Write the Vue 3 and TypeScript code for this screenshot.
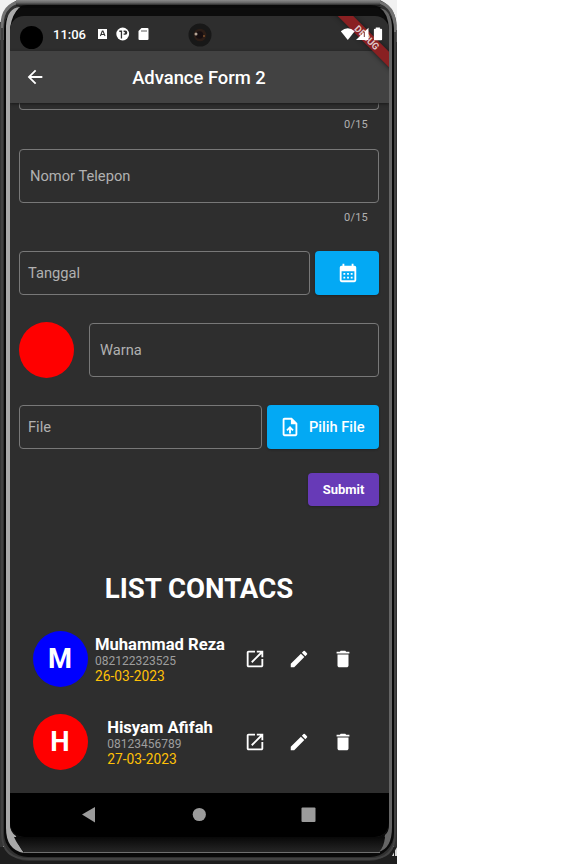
<script setup lang="ts">
interface Contact {
  initial: string
  name: string
  phone: string
  date: string
  color: string
}

const contacts: Contact[] = [
  { initial: 'M', name: 'Muhammad Reza', phone: '082122323525', date: '26-03-2023', color: '#0000ff' },
  { initial: 'H', name: 'Hisyam Afifah', phone: '08123456789', date: '27-03-2023', color: '#ff0000' },
]
</script>

<template>
  <div class="stage">
    <div class="phone">
      <svg class="shell" width="397" height="864" viewBox="0 0 397 864" aria-hidden="true">
        <defs>
          <linearGradient id="metal" x1="0" y1="0" x2="0" y2="1">
            <stop offset="0" stop-color="#8a8a8a" />
            <stop offset="0.45" stop-color="#666" />
            <stop offset="1" stop-color="#111" />
          </linearGradient>
          <linearGradient id="chin" x1="0" y1="0" x2="0" y2="1">
            <stop offset="0" stop-color="#080808" />
            <stop offset="1" stop-color="#252525" />
          </linearGradient>
        </defs>
        <rect width="397" height="60" fill="#f1f1f1" />
        <rect y="22" width="3" height="842" fill="#353535" />
        <rect x="394" y="30" width="3" height="817" fill="#303030" />
        <rect y="847" width="397" height="17" fill="#1e1e1e" />
        <path d="M397 847v9h-5z" fill="#d8d8d8" />
        <path d="M394.5 849v8" stroke="#1e1e1e" />
        <rect x="1" y="-2" width="395.5" height="863" rx="27" fill="#303030" />
        <path d="M2 40V26Q2 1 28 1H370Q395 1 395 28V42" fill="none" stroke="#727272" stroke-width="3" />
        <rect x="16" width="364" height="6" fill="url(#metal)" />
        <path d="M2 28V834Q2 859 29 859H370Q395 859 395 834V32" fill="none" stroke="#424242" stroke-width="2" />
        <rect x="4" y="5" width="390" height="852" rx="24" fill="#090909" />
        <path d="M20 7Q7 8 6 26V828Q6 850 24 853Q17 844 16 836Q10 832 10 825V28Q12 14 20 7Z" fill="#a9a9a9" />
        <path d="M380 8Q392 10 392 29V827Q392 849 378 852Q384 844 385 835Q389 832 389 825V29Q388 13 380 8Z" fill="#656565" />
        <path d="M19 8H378Q387 13 388 34H11Q12 16 19 8Z" fill="#0c0c0c" />
        <path d="M14 837H385Q384 847 379 852H24Q17 844 14 837Z" fill="url(#chin)" />
        <path d="M24 852.5H380" stroke="#707070" />
      </svg>

      <main class="screen">
        <header class="status">
          <span class="punch"></span>
          <span class="clock">11:06</span>
          <svg class="notices" width="51" height="14" viewBox="0 0 51 14">
            <rect x="1" y="2" width="9" height="10" fill="#fff" />
            <path d="M3.4 9 5.3 4h.7L8 9M4.2 7.5h3" fill="none" stroke="#333" stroke-width="1.1" />
            <circle cx="25.7" cy="7" r="6.4" fill="#fff" />
            <path d="M22.3 3.6h2.8v7.8h-1.3V4.9h-1.5zM26.6 3.6h1.6a2.1 2.1 0 0 1 0 4.2h-1.6V6.6h1.2V4.9h-1.2z" fill="#333" />
            <path d="M44.5 1h6q1 0 1 1v10q0 1-1 1h-8q-1 0-1-1V4z" fill="#fff" />
            <path d="M45 3v2M47 3v2M49 3v2" stroke="#333" stroke-width=".8" />
          </svg>
          <svg class="camera" width="24" height="24" viewBox="0 0 24 24">
            <circle cx="12" cy="12" r="11.5" fill="#181818" />
            <circle cx="12" cy="12" r="6.3" fill="#2b1d17" />
            <circle cx="11.5" cy="12" r="3.8" fill="#160e10" />
            <circle cx="8" cy="11" r="1.5" fill="#b4a597" />
            <circle cx="16" cy="13" r="1" fill="#80502b" />
          </svg>
          <svg class="signals" width="44" height="16" viewBox="0 0 44 16">
            <path d="M.8 5.3Q7.8-.8 14.7 5.3L7.8 14z" fill="#fff" />
            <path d="M28.5 1.8V14H16z" fill="#fff" />
            <path d="M24.3 6v5" stroke="#763333" />
            <path d="M35.8 2.8V1.5h4.1v1.3h1.2q1 0 1 1v9.4q0 1-1 1h-6.2q-1 0-1-1V3.8q0-1 1-1z" fill="#fff" />
          </svg>
        </header>

        <div class="appbar">
          <svg class="back" width="22" height="22" viewBox="0 0 24 24"><path d="M20 11H7.83l5.59-5.59L12 4l-8 8 8 8 1.41-1.41L7.83 13H20z" fill="#fff" /></svg>
          <h1>Advance Form 2</h1>
        </div>

        <section class="content">
          <div class="field cut"></div>
          <p class="counter first">0/15</p>
          <div class="field tall">Nomor Telepon</div>
          <p class="counter second">0/15</p>
          <div class="row date">
            <div class="field">Tanggal</div>
            <button class="blue calendar" aria-label="Tanggal">
              <svg width="22" height="22" viewBox="0 0 24 24"><path fill="#fff" fill-rule="evenodd" d="M19 4h-1V2h-2v2H8V2H6v2H5q-2 0-2 2v14q0 2 2 2h14q2 0 2-2V6q0-2-2-2zm0 16H5V10h14zM7 12h2v2H7zm4 0h2v2h-2zm4 0h2v2h-2zM7 16h2v2H7zm4 0h2v2h-2zm4 0h2v2h-2z" /></svg>
            </button>
          </div>
          <div class="row color">
            <span class="disc"></span>
            <div class="field tall">Warna</div>
          </div>
          <div class="row file">
            <div class="field">File</div>
            <button class="blue pick">
              <svg width="22" height="22" viewBox="0 0 24 24"><path fill="#fff" d="M14 2H6c-1.1 0-2 .9-2 2v16c0 1.1.89 2 1.99 2H18c1.1 0 2-.9 2-2V8zm4 18H6V4h7v5h5zM8 15.01l1.41 1.41L11 14.84V19h2v-4.16l1.59 1.59L16 15.01 12.01 11z" /></svg>
              <span>Pilih File</span>
            </button>
          </div>
          <button class="submit">Submit</button>

          <h2>LIST CONTACS</h2>
          <ul>
            <li v-for="c in contacts" :key="c.phone">
              <span class="avatar" :style="{ backgroundColor: c.color }">{{ c.initial }}</span>
              <div class="who">
                <div>
                  <strong>{{ c.name }}</strong>
                  <span class="phone-no">{{ c.phone }}</span>
                  <span class="when">{{ c.date }}</span>
                </div>
              </div>
              <div class="actions">
                <svg width="22" height="22" viewBox="0 0 24 24"><path fill="#fff" d="M19 19H5V5h7V3H5c-1.11 0-2 .9-2 2v14c0 1.1.89 2 2 2h14c1.1 0 2-.9 2-2v-7h-2zM14 3v2h3.59l-9.83 9.83 1.41 1.41L19 6.41V10h2V3z" /></svg>
                <svg width="22" height="22" viewBox="0 0 24 24"><path fill="#fff" d="M3 17.25V21h3.75L17.81 9.94l-3.75-3.75zM20.71 7.04a1 1 0 0 0 0-1.41l-2.34-2.34a1 1 0 0 0-1.41 0l-1.83 1.83 3.75 3.75z" /></svg>
                <svg width="22" height="22" viewBox="0 0 24 24"><path fill="#fff" d="M6 19c0 1.1.9 2 2 2h8c1.1 0 2-.9 2-2V7H6zM19 4h-3.5l-1-1h-5l-1 1H5v2h14z" /></svg>
              </div>
            </li>
          </ul>
        </section>

        <nav>
          <svg width="379" height="44" viewBox="0 0 379 44" fill="#9b9b9b">
            <path d="M72 21.5 85 14v15.5z" />
            <circle cx="189.3" cy="21.5" r="6.6" />
            <rect x="291.5" y="14.5" width="14" height="14.5" rx="1" />
          </svg>
        </nav>

        <div class="banner"><span>DEBUG</span></div>
      </main>
    </div>
  </div>
</template>

<style>
body {
  margin: 0;
  background: #fff;
}
</style>

<style scoped>
.stage {
  width: 585px;
  height: 864px;
  overflow: hidden;
  font-family: Roboto, "Liberation Sans", sans-serif;
}
.phone {
  position: relative;
  box-sizing: border-box;
  width: 397px;
  height: 864px;
  padding: 16px 8px 27px 10px;
}
.shell {
  position: absolute;
  inset: 0;
}
.screen {
  position: relative;
  display: flex;
  flex-direction: column;
  width: 379px;
  height: 821px;
  overflow: hidden;
  border-radius: 14px;
  background: #2e2e2e;
  color: #fff;
}
.status {
  position: relative;
  z-index: 3;
  display: flex;
  align-items: center;
  flex: 0 0 35px;
  height: 35px;
}
.punch {
  width: 23px;
  height: 23px;
  margin: 7px 0 0 10px;
  border-radius: 50%;
  background: #000;
}
.clock {
  width: 34px;
  margin: 2px 0 0 10px;
  font-size: 13px;
  font-weight: 500;
  line-height: 16px;
  white-space: nowrap;
}
.notices {
  margin: 1px 0 0 10px;
  overflow: visible;
}
.camera {
  margin: 3px 0 0 40px;
}
.signals {
  margin: 0 5px 0 auto;
}
.appbar {
  position: relative;
  display: flex;
  align-items: center;
  flex: 0 0 52px;
  background: #424242;
  box-shadow: 0 1px 3px #191919;
}
.back {
  margin-left: 14px;
}
h1 {
  flex: 1;
  margin: 2px 37px 0 0;
  font-size: 18.4px;
  font-weight: 500;
  line-height: 24px;
  text-align: center;
}
.content {
  display: flex;
  flex-direction: column;
  flex: 1;
  padding: 0 10px 0 9px;
}
.field {
  box-sizing: border-box;
  display: flex;
  align-items: center;
  height: 44px;
  padding: 0 9px 1px 8px;
  border: 1px solid #787878;
  border-radius: 4px;
  color: #b1b1b1;
  font-size: 14.7px;
}
.field.tall {
  height: 54px;
  padding: 0 9px 0 10px;
}
.field.cut {
  height: 7px;
  border-top: 0;
  border-radius: 0 0 4px 4px;
}
.counter {
  height: 14px;
  margin: 0;
  padding-right: 11px;
  color: #b1b1b1;
  font-size: 11px;
  letter-spacing: 0.2px;
  line-height: 14px;
  text-align: right;
}
.counter.first {
  margin: 8px 0 17px;
}
.counter.second {
  margin: 8px 0 26px;
}
.row {
  display: flex;
  align-items: center;
  gap: 5px;
}
.row .field {
  flex: 1;
}
.color {
  gap: 15px;
  margin: 27px 0;
}
.disc,
.avatar {
  flex: 0 0 55px;
  width: 55px;
  height: 56px;
  border-radius: 50%;
  background: #f00;
}
button {
  display: flex;
  align-items: center;
  justify-content: center;
  box-sizing: border-box;
  margin: 0;
  padding: 0;
  border: 0;
  border-radius: 4px;
  color: #fff;
  font: 500 14.6px Roboto, "Liberation Sans", sans-serif;
  box-shadow: 0 1px 2px #222;
}
.blue {
  height: 44px;
  background: #03a9f4;
}
.calendar {
  width: 64px;
  padding-left: 1px;
}
.pick {
  gap: 7.5px;
  width: 112px;
  padding-right: 2px;
}
.submit {
  align-self: flex-end;
  width: 71px;
  height: 33px;
  margin-top: 24px;
  background: #673ab7;
  font-size: 13px;
  font-weight: 700;
}
h2 {
  height: 34px;
  margin: 66px 0 0;
  font-size: 27.6px;
  font-weight: 700;
  line-height: 34px;
  text-align: center;
}
ul {
  display: flex;
  flex-direction: column;
  gap: 27px;
  margin: 25px 0 0;
  padding: 0 0 0 14px;
  list-style: none;
}
li {
  display: flex;
  align-items: center;
  height: 56px;
}
.avatar {
  display: flex;
  align-items: center;
  justify-content: center;
  box-sizing: border-box;
  padding-right: 1px;
  font-size: 27.4px;
  font-weight: 700;
}
.who {
  display: flex;
  justify-content: center;
  width: 144px;
}
.who div {
  display: flex;
  flex-direction: column;
  padding-top: 1px;
}
strong {
  font-size: 16.6px;
  line-height: 18px;
  white-space: nowrap;
}
.phone-no {
  color: #9e9e9e;
  font-size: 12px;
  line-height: 14px;
}
.when {
  color: #ffc107;
  font-size: 13.8px;
  line-height: 16px;
}
.actions {
  display: flex;
  gap: 22px;
  margin-left: 12.4px;
}
nav {
  flex: 0 0 44px;
  height: 44px;
  background: #000;
}
nav svg {
  display: block;
}
.banner {
  position: absolute;
  z-index: 2;
  top: 16px;
  right: -33px;
  width: 110px;
  height: 11px;
  transform: rotate(45deg);
  background: #892022;
  box-shadow: 0 0 5px #181818;
  text-align: center;
}
.banner span {
  display: block;
  color: #dfc8c8;
  font-size: 9.5px;
  font-weight: 700;
  line-height: 11px;
}
</style>
